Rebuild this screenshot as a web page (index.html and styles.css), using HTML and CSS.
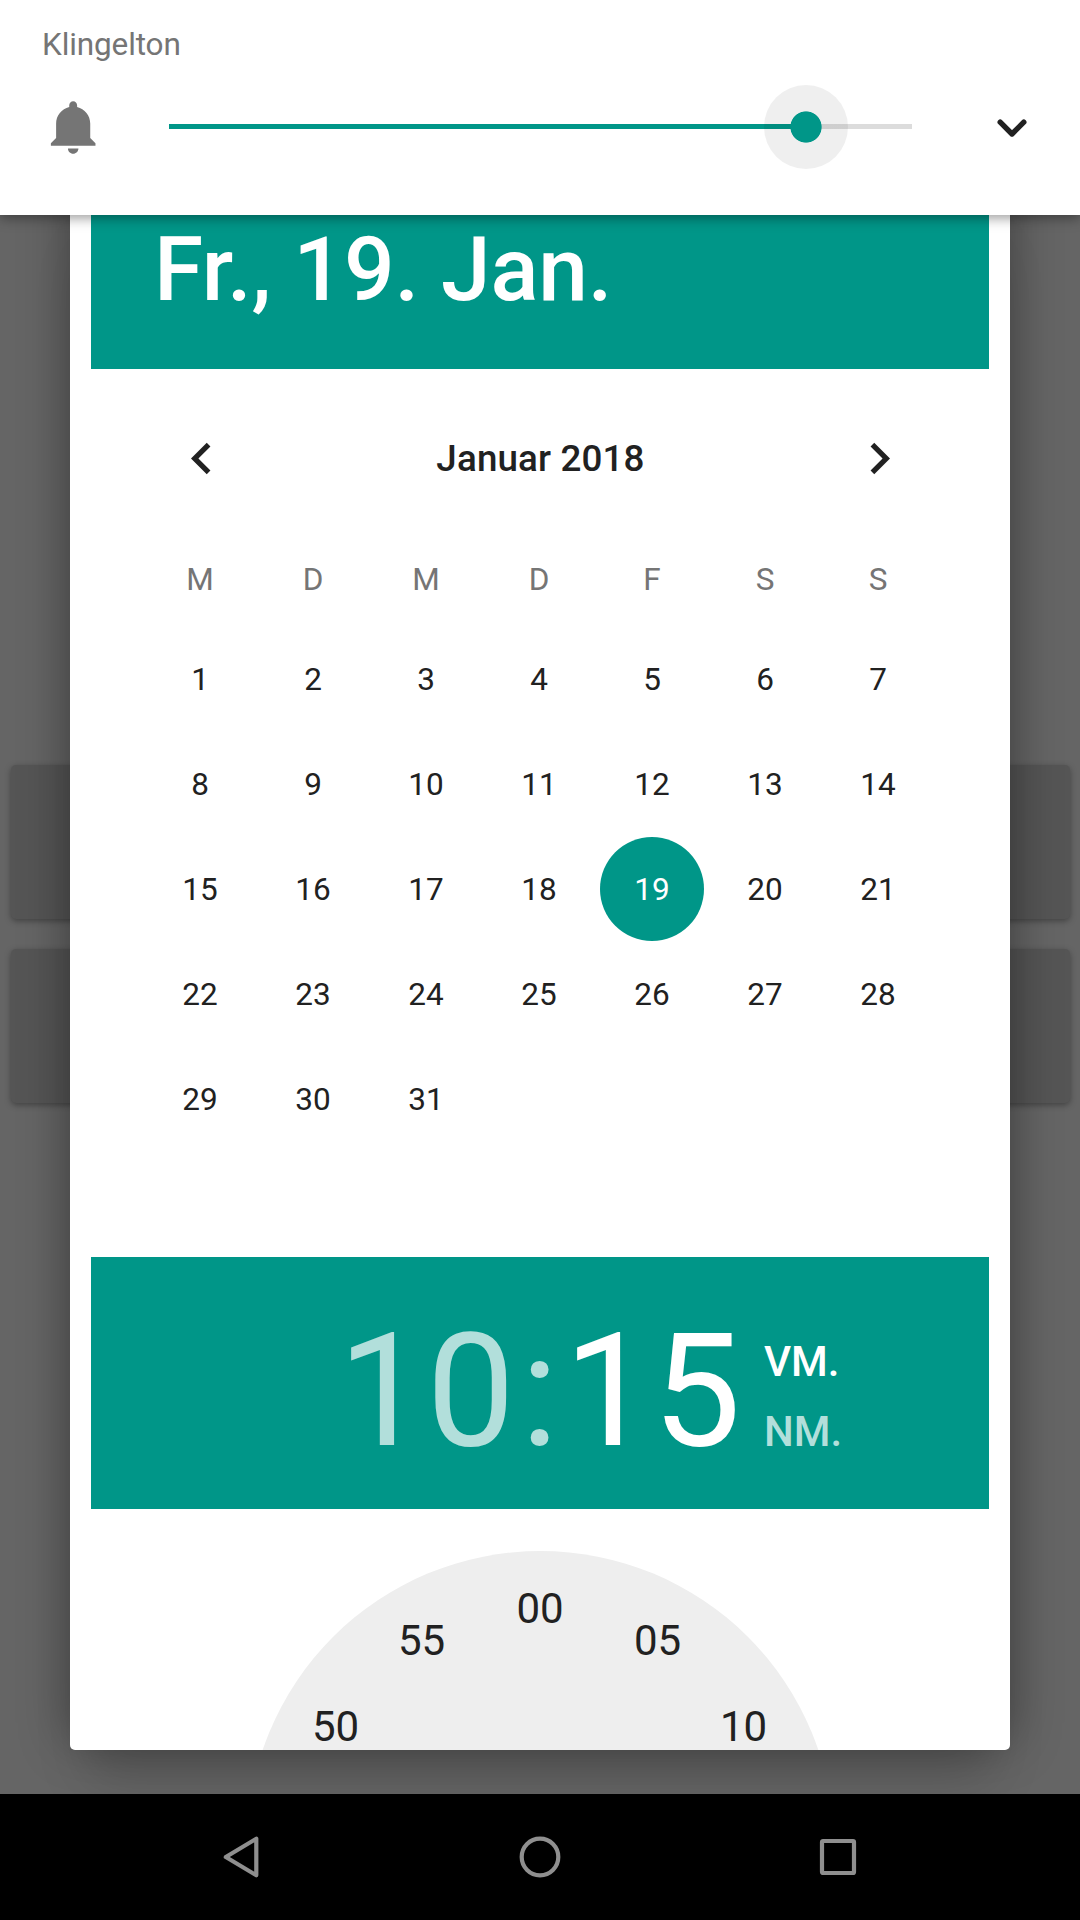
FILE: index.html
```html
<!DOCTYPE html>
<html lang="de">
<head>
<meta charset="utf-8">
<title>Datum und Uhrzeit</title>
<link rel="stylesheet" href="styles.css">
</head>
<body>
<div class="screen">
  <main class="app">
    <div class="app-card"></div>
    <div class="app-card"></div>
  </main>

  <section class="dialog">
    <header class="date-header">Fr., 19. Jan.</header>
    <div class="calendar">
      <div class="month-bar">
        <svg class="arrow" viewBox="0 0 24 24"><path d="M15.41 7.41L14 6l-6 6 6 6 1.41-1.41L10.83 12z"/></svg>
        <h2 class="month">Januar 2018</h2>
        <svg class="arrow" viewBox="0 0 24 24"><path d="M10 6L8.59 7.41 13.17 12l-4.58 4.59L10 18l6-6z"/></svg>
      </div>
      <div class="weekdays">
        <span>M</span><span>D</span><span>M</span><span>D</span><span>F</span><span>S</span><span>S</span>
      </div>
      <div class="days">
        <span>1</span><span>2</span><span>3</span><span>4</span><span>5</span><span>6</span><span>7</span>
        <span>8</span><span>9</span><span>10</span><span>11</span><span>12</span><span>13</span><span>14</span>
        <span>15</span><span>16</span><span>17</span><span>18</span><span class="selected">19</span><span>20</span><span>21</span>
        <span>22</span><span>23</span><span>24</span><span>25</span><span>26</span><span>27</span><span>28</span>
        <span>29</span><span>30</span><span>31</span>
      </div>
    </div>
    <header class="time-header">
      <div class="time"><span class="dim">10</span><span class="colon dim">:</span><span>15</span></div>
      <div class="ampm"><span>VM.</span><span class="dim">NM.</span></div>
    </header>
    <div class="clock">
      <div class="dial">
        <span class="minute m50">50</span>
        <span class="minute m55">55</span>
        <span class="minute m00">00</span>
        <span class="minute m05">05</span>
        <span class="minute m10">10</span>
      </div>
    </div>
  </section>

  <section class="volume">
    <div class="volume-label">Klingelton</div>
    <div class="volume-row">
      <svg class="bell" viewBox="0 0 24 24"><path d="M11.5 22c1.1 0 2-.9 2-2h-4c0 1.1.9 2 2 2zM18 16v-5.5c0-3.07-2.13-5.64-5-6.32V3.5c0-.83-.67-1.5-1.5-1.5S10 2.67 10 3.5v.68c-2.87.68-5 3.25-5 6.32V16l-2 2v1h17v-1l-2-2z"/></svg>
      <div class="slider">
        <div class="slider-fill"></div>
        <div class="slider-thumb"></div>
      </div>
      <svg class="expand" viewBox="0 0 36 24"><path d="M6.2 5.2L18 17 29.8 5.2"/></svg>
    </div>
  </section>

  <nav class="navbar">
    <svg class="nav-icon" viewBox="0 0 48 48"><path d="M38.3 5.7v36.6L7.8 24z"/></svg>
    <svg class="nav-icon" viewBox="0 0 48 48"><circle cx="24" cy="24" r="18.3"/></svg>
    <svg class="nav-icon" viewBox="0 0 48 48"><rect x="8" y="8" width="32" height="32" rx="1"/></svg>
  </nav>
</div>
</body>
</html>
```
FILE: styles.css
```css
* {
  box-sizing: border-box;
}

body {
  margin: 0;
  font-family: Roboto, sans-serif;
  color: #212121;
}

.screen {
  position: relative;
  display: flex;
  flex-direction: column;
  width: 1080px;
  height: 1920px;
  overflow: hidden;
  background: #656565;
}

.app {
  flex: 1;
  display: flex;
  flex-direction: column;
  gap: 30px;
  padding: 765px 10.5px 0;
}

.app-card {
  height: 154px;
  border-radius: 5px;
  background: #555;
  box-shadow: 0 2px 6px rgba(0, 0, 0, 0.35);
}

/* Picker dialog */
.dialog {
  position: absolute;
  top: 190px;
  left: 70px;
  width: 939.5px;
  height: 1560px;
  padding: 0 20.5px 0 21px;
  overflow: hidden;
  border-radius: 5px;
  background: #fff;
  box-shadow: 0 -10px 50px rgba(0, 0, 0, 0.38), 0 44px 50px -20px rgba(0, 0, 0, 0.18);
}

.date-header {
  height: 179px;
  padding: 27px 63px 0;
  background: #009688;
  color: #fff;
  font-size: 89.25px;
  font-weight: 500;
  letter-spacing: -0.2px;
  line-height: 105px;
}

.calendar {
  display: flex;
  flex-direction: column;
  height: 888px;
  padding: 58px 52.5px 0;
}

.month-bar {
  display: flex;
  justify-content: space-between;
  align-items: center;
  height: 63px;
  padding: 0 25.5px 0 26.5px;
}

.month {
  margin: 0;
  font-size: 36.75px;
  font-weight: 500;
  letter-spacing: 0.15px;
  line-height: 44px;
}

.arrow {
  width: 63px;
  height: 63px;
  fill: #212121;
}

.weekdays,
.days {
  display: grid;
  grid-template-columns: repeat(7, 113px);
  justify-items: center;
  align-items: center;
  font-size: 31.5px;
}

.weekdays {
  height: 80px;
  margin-top: 49px;
  color: #757575;
}

.days {
  grid-auto-rows: 105px;
  margin-top: 7.5px;
}

.selected {
  display: flex;
  align-items: center;
  justify-content: center;
  width: 104px;
  height: 104px;
  border-radius: 50%;
  background: #009688;
  color: #fff;
}

.time-header {
  display: flex;
  height: 252px;
  padding: 42px 0 0 247px;
  background: #009688;
  color: #fff;
}

.time {
  display: flex;
  width: 426px;
  font-size: 157.5px;
  line-height: 184px;
}

.colon {
  width: 49px;
  text-align: center;
}

.dim {
  color: #b2dfdb;
}

.ampm {
  display: flex;
  flex-direction: column;
  padding-top: 28px;
  font-size: 42px;
  font-weight: 500;
  line-height: 70px;
}

.clock {
  display: flex;
  justify-content: center;
  padding-top: 42px;
}

.dial {
  position: relative;
  flex: none;
  width: 587px;
  height: 587px;
  border-radius: 50%;
  background: #eee;
}

.minute {
  position: absolute;
  font-size: 42px;
  line-height: 50px;
  transform: translate(-50%, -50%);
}

.m50 { left: 89px; top: 176px; }
.m55 { left: 175px; top: 90px; }
.m00 { left: 293.5px; top: 58px; }
.m05 { left: 411px; top: 90px; }
.m10 { left: 497px; top: 176px; }

/* Volume panel */
.volume {
  position: absolute;
  top: 0;
  left: 0;
  width: 1080px;
  height: 215px;
  padding: 25px 50px 0 42px;
  background: #fff;
  box-shadow: 0 3px 12px rgba(0, 0, 0, 0.4);
}

.volume-label {
  color: #757575;
  font-size: 31.5px;
  letter-spacing: -0.12px;
  line-height: 40px;
}

.volume-row {
  display: flex;
  align-items: center;
  height: 63px;
  margin-top: 30px;
}

.bell {
  width: 63px;
  height: 63px;
  margin: 2px 0 0 1px;
  fill: #757575;
}

.slider {
  position: relative;
  width: 743px;
  height: 5px;
  margin-left: 63px;
  background: #dcdcdc;
}

.slider-fill {
  width: 637px;
  height: 5px;
  background: #009688;
}

.slider-thumb {
  position: absolute;
  left: 637px;
  top: 2.5px;
  width: 84px;
  height: 84px;
  border-radius: 50%;
  background: radial-gradient(circle, #009688 15.2px, rgba(0, 0, 0, 0.063) 16px);
  transform: translate(-50%, -50%);
}

.expand {
  width: 36px;
  height: 24px;
  margin: 5px 0 0 82.5px;
  fill: none;
  stroke: #212121;
  stroke-width: 5.4;
  stroke-linecap: round;
  stroke-linejoin: round;
}

/* System navigation */
.navbar {
  display: flex;
  justify-content: space-between;
  align-items: center;
  height: 126px;
  padding: 0 218px;
  background: #000;
}

.nav-icon {
  width: 48px;
  height: 48px;
  fill: none;
  stroke: #8f8f8f;
  stroke-width: 4.2;
  stroke-linejoin: round;
}
```
